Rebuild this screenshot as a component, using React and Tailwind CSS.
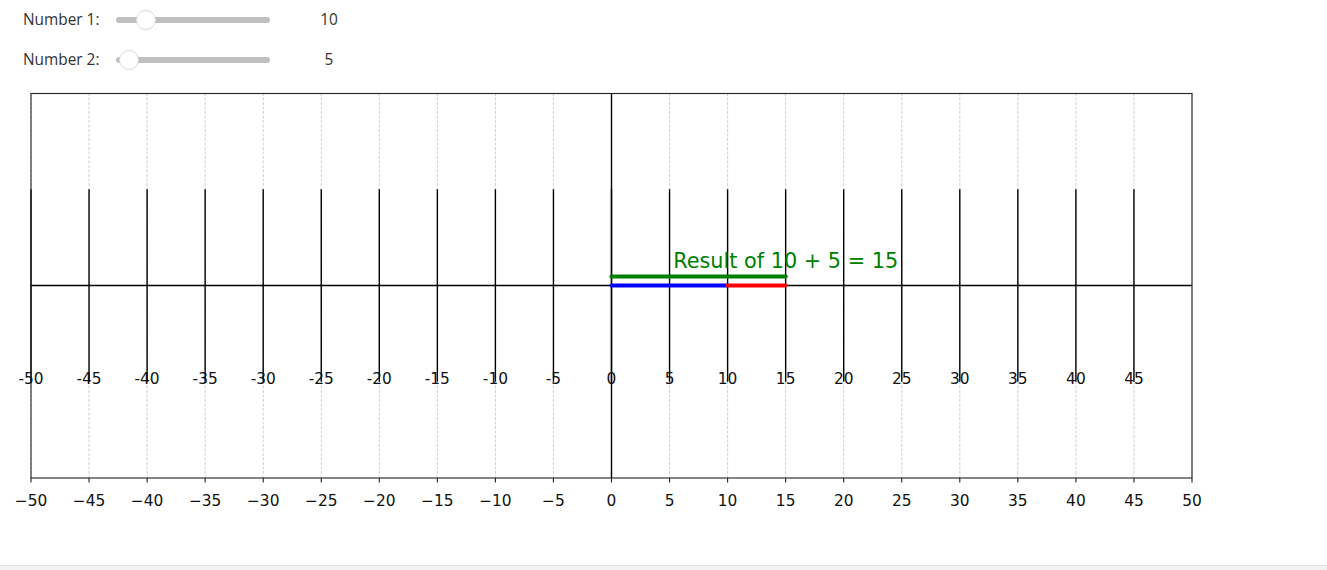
import React from "react";

const X = (v) => 611.5 + v * 11.61;
const Y = (y) => 285.5 - y * 96.25;

const ticks = [];
for (let v = -50; v <= 45; v += 5) ticks.push(v);
const axisTicks = [];
for (let v = -50; v <= 50; v += 5) axisTicks.push(v);

function SliderRow({ label, value, handleLeft }) {
  return (
    <div className="flex h-10 items-center">
      <div className="w-[93px] text-[15.4px] text-[#333]" style={{ fontFamily: '"Open Sans", sans-serif' }}>
        {label}
      </div>
      <div className="relative h-[20px] w-[154px] flex items-center">
        <div className="h-[6px] w-full rounded-full bg-[#bfbfbf]" />
        <div
          className="absolute top-0 h-[20px] w-[20px] rounded-full border border-[#d9d9d9] bg-white"
          style={{ left: handleLeft }}
        />
      </div>
      <div
        className="ml-[20px] w-[78px] text-center text-[15.4px] text-[#333]"
        style={{ fontFamily: '"Open Sans", sans-serif' }}
      >
        {value}
      </div>
    </div>
  );
}

function Chart() {
  const font = '"DejaVu Sans", sans-serif';
  return (
    <svg width="1327" height="485" viewBox="0 80 1327 485" className="block">
      {axisTicks.map((v) => (
        <line
          key={"g" + v}
          x1={X(v)}
          x2={X(v)}
          y1={93}
          y2={478}
          stroke="#c4c4c4"
          strokeWidth="0.8"
          strokeDasharray="3 1.5"
        />
      ))}
      {ticks.map((v) => (
        <line key={"t" + v} x1={X(v)} x2={X(v)} y1={Y(1)} y2={Y(-1)} stroke="#000" strokeWidth="1.4" />
      ))}
      <line x1={31} x2={1192} y1={Y(0)} y2={Y(0)} stroke="#000" strokeWidth="1.4" />
      <line x1={X(0)} x2={X(0)} y1={93} y2={478} stroke="#000" strokeWidth="1.4" />
      {ticks.map((v) => (
        <text
          key={"l" + v}
          x={X(v)}
          y={383.5}
          textAnchor="middle"
          fontFamily={font}
          fontSize="15.4"
          fill="#111"
        >
          {String(v)}
        </text>
      ))}
      <line x1={X(0)} x2={X(15)} y1={276.5} y2={276.5} stroke="#008000" strokeWidth="4.2" strokeLinecap="round" />
      <line x1={X(0)} x2={X(10)} y1={Y(0)} y2={Y(0)} stroke="#0000ff" strokeWidth="4.2" strokeLinecap="round" />
      <line x1={X(10)} x2={X(15)} y1={Y(0)} y2={Y(0)} stroke="#ff0000" strokeWidth="4.2" strokeLinecap="round" />
      <text x={X(15)} y={268} textAnchor="middle" fontFamily={font} fontSize="20.8" fill="#008000">
        Result of 10 + 5 = 15
      </text>
      <rect x={31} y={93.5} width={1161} height={384.5} fill="none" stroke="#222" strokeWidth="1.1" />
      {axisTicks.map((v) => (
        <g key={"a" + v}>
          <line x1={X(v)} x2={X(v)} y1={478} y2={482.5} stroke="#222" strokeWidth="1.1" />
          <text x={X(v)} y={505.5} textAnchor="middle" fontFamily={font} fontSize="15.4" fill="#111">
            {v < 0 ? "\u2212" + Math.abs(v) : String(v)}
          </text>
        </g>
      ))}
    </svg>
  );
}

export default function App() {
  return (
    <div className="w-[1327px] bg-white">
      <div className="h-[565px]">
        <div className="pl-[23px]">
          <SliderRow label="Number 1:" value="10" handleLeft={20} />
          <SliderRow label="Number 2:" value="5" handleLeft={3} />
        </div>
        <Chart />
      </div>
      <div className="h-[5px] border-t border-[#e2e2e2] bg-[#f2f2f2]" />
    </div>
  );
}
